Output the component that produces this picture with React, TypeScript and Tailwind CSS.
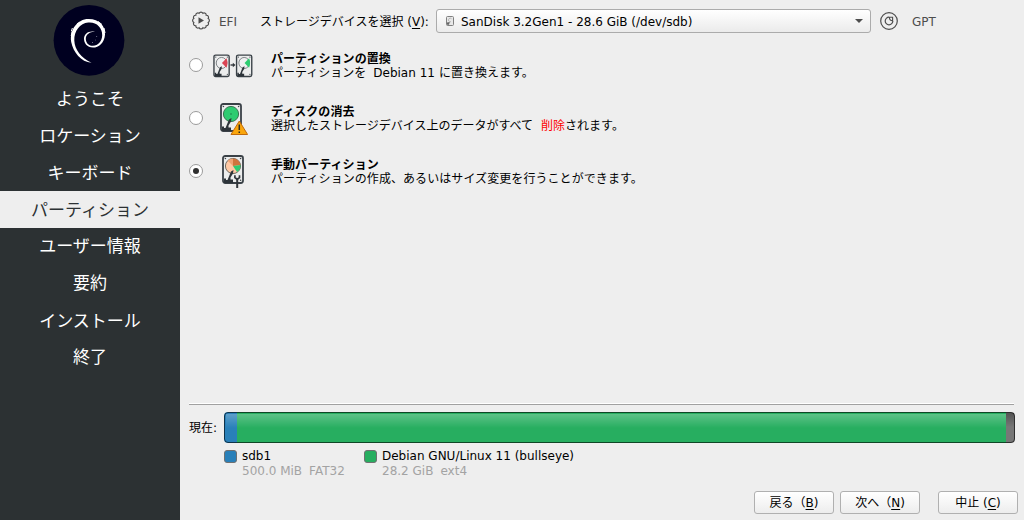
import type { ReactNode } from 'react';

const steps = [
  { id: 'welcome', label: 'ようこそ', height: 'h-[37px]' },
  { id: 'locale', label: 'ロケーション', height: 'h-[37px]' },
  { id: 'keyboard', label: 'キーボード', height: 'h-[37px]' },
  { id: 'partition', label: 'パーティション', height: 'h-[37px]' },
  { id: 'users', label: 'ユーザー情報', height: 'h-9' },
  { id: 'summary', label: '要約', height: 'h-[37px]' },
  { id: 'install', label: 'インストール', height: 'h-[38px] pt-px' },
  { id: 'finished', label: '終了', height: 'h-9' },
];

const currentStep = 'partition';

function DebianLogo() {
  return (
    <svg className="w-[72px] h-[72px]" viewBox="53 4 72 72" fill="none">
      <circle cx="89" cy="40.3" r="35.4" fill="#000020" />
      <path
        d="M91.5 62.7C81 62.2 73.2 52 71.2 42C69.3 29.8 77.5 19 88.3 19C99 18.8 105.7 26 105 34.7C104.3 43 98.8 47.6 93 47.6C87 47.5 83.8 43 84 38.3C84.3 33.4 89 30.2 95.3 31.8C90.5 31.3 86 34.2 85.8 38.5C85.7 42.7 88.6 46 93 45.8C98 45.4 102 41.5 102.2 35.2C102.3 27.5 96.2 21.7 88.2 22.6C80 23.4 74 31 74.3 40.5C74.7 49.8 81 58 91.5 62.7Z"
        fill="#fff"
      />
      <path d="M77 24l3-2M71.4 31l1-3M71.2 36l1-5M98 21.5l4 3M104 28l1 5" stroke="#fff" strokeWidth="1" />
      <g fill="#8888a0">
        <circle cx="96.7" cy="36.6" r="0.5" />
        <circle cx="95.5" cy="40" r="0.4" />
        <circle cx="92.5" cy="42.5" r="0.5" />
      </g>
    </svg>
  );
}

// Outline of a cog with rounded teeth, one arc per tooth
const TEETH = 12;
const cogPoints = Array.from({ length: TEETH }, (_, i) => {
  const angle = ((i + 0.5) * 2 * Math.PI) / TEETH;
  return `${(7.4 * Math.cos(angle)).toFixed(2)} ${(7.4 * Math.sin(angle)).toFixed(2)}`;
});
const cogPath = `M${cogPoints[TEETH - 1]}${cogPoints.map((p) => `A2.1 2.1 0 0 1 ${p}`).join('')}Z`;

function EfiIcon() {
  return (
    <svg className="w-5 h-5" viewBox="-10 -9.5 20 20" fill="none">
      <path d={cogPath} stroke="#4d4d4d" strokeWidth="1.15" />
      <path d="M-2.5 -3.3L3 0L-2.5 3.3Z" fill="#4d4d4d" />
    </svg>
  );
}

function TableIcon() {
  return (
    <svg className="w-5 h-5" viewBox="-10 -10 20 20" fill="none" stroke="#4d4d4d">
      <circle r="8.3" strokeWidth="1.2" />
      <path d="M0 -3.8A3.8 3.8 0 1 0 3.8 0" strokeWidth="1.2" />
      <path d="M.4 -3.8H3.6V-.2Q.4 -.4 .4 -3.8Z" strokeWidth="1.1" />
    </svg>
  );
}

function Drive({ children }: { children: ReactNode }) {
  return (
    <>
      <rect x="1" y="1" width="20" height="27" rx="2.2" fill="#eceded" stroke="#3a4147" strokeWidth="1.8" />
      <g fill="#3a4147">
        <circle cx="3.4" cy="3.5" r="0.8" />
        <circle cx="18.6" cy="3.5" r="0.8" />
        <circle cx="18.6" cy="25.3" r="0.8" />
      </g>
      {children}
      <path d="M2 23.5H4V25H5.5L9 16.5L11.5 15L11 18.5L8.5 22.5V24.5H11V28H2Z" fill="#2d343a" />
    </>
  );
}

function ReplaceIcon() {
  return (
    <svg className="w-10 h-6" viewBox="0 0 40 24" fill="none">
      <g transform="translate(.2 .3) scale(.76 .79)">
        <Drive>
          <circle cx="11" cy="11" r="7" fill="#eff0f1" stroke="#6c7276" strokeWidth="1.1" />
          <path d="M11.5 11L17.5 5Q20 11 17.5 17Z" fill="#da4453" />
        </Drive>
      </g>
      <path d="M17.5 11H20" stroke="#31363b" strokeWidth="1.4" />
      <path d="M19.8 8.8L22.5 11L19.8 13.2Z" fill="#31363b" />
      <g transform="translate(22.8 .3) scale(.76 .79)">
        <Drive>
          <circle cx="11" cy="11" r="7" fill="#eff0f1" stroke="#6c7276" strokeWidth="1.1" />
          <path d="M11.5 11L17.5 5Q20 11 17.5 17Z" fill="#2ecc71" />
        </Drive>
      </g>
    </svg>
  );
}

function EraseIcon() {
  return (
    <svg className="w-7 h-8 ml-[2px]" viewBox="0 0 28 32" fill="none">
      <Drive>
        <circle cx="11" cy="11" r="7.6" fill="#2ecc71" stroke="#3b7552" />
        <circle cx="11" cy="11" r="0.8" fill="#247c47" />
      </Drive>
      <path d="M19.3 18L27.6 31.5H11Z" fill="#faa60c" stroke="#c06a0c" />
      <path d="M19.3 21.5V27M19.3 28.5V30" stroke="#2b2b20" strokeWidth="1.5" />
    </svg>
  );
}

function ManualIcon() {
  return (
    <svg className="w-[22px] h-[34px]" viewBox="0 0 22 34" fill="none">
      <Drive>
        <circle cx="11" cy="11" r="7.6" fill="#ffc9a5" stroke="#706b61" />
        <path d="M11 11L5.7 5.7A7.4 7.4 0 0 1 11 3.5Z" fill="#efa375" />
        <path d="M11 11V3.5A7.5 7.5 0 0 1 18.5 10Z" fill="#cf753d" />
        <path d="M11 11L18.5 10A7.5 7.5 0 0 1 15 17Z" fill="#2ecc71" />
      </Drive>
      <path d="M12.9 20.2V22.5L15.2 24.3L17.5 22.5V20.2" stroke="#31363b" strokeWidth="1.7" />
      <path d="M15.2 24V33" stroke="#31363b" strokeWidth="2" />
    </svg>
  );
}

function DiskIcon() {
  return (
    <svg className="w-2 h-2.5" viewBox="0 0 8 10" fill="none">
      <rect x="0.5" y="0.5" width="7" height="9" rx="1" fill="#e8e8e8" stroke="#808080" />
      <path d="M5.5 2.7A1.8 1.8 0 1 0 5 5.7" stroke="#aaa" strokeWidth="0.8" />
      <path d="M1 6.5L3.8 6L3 8.7H1Z" fill="#666" />
    </svg>
  );
}

const choices = [
  {
    id: 'replace',
    icon: <ReplaceIcon />,
    title: 'パーティションの置換',
    text: (
      <>
        パーティションを<span className="ml-[7px] mr-1">Debian 11</span>に置き換えます。
      </>
    ),
  },
  {
    id: 'erase',
    icon: <EraseIcon />,
    title: 'ディスクの消去',
    text: (
      <>
        選択したストレージデバイス上のデータがすべて
        <span className="ml-2 text-[#ff0000]">削除</span>されます。
      </>
    ),
  },
  {
    id: 'manual',
    icon: <ManualIcon />,
    title: '手動パーティション',
    text: (
      <span className="tracking-[0.07px]">パーティションの作成、あるいはサイズ変更を行うことができます。</span>
    ),
  },
];

const selectedChoice = 'manual';

function Radio({ checked }: { checked: boolean }) {
  return (
    <span className="w-3.5 h-3.5 mb-0.5 shrink-0 rounded-full border border-[#9b9b9b] bg-white flex items-center justify-center">
      {checked && <span className="w-1.5 h-1.5 rounded-full bg-[#303030]" />}
    </span>
  );
}

const legend = [
  { name: 'sdb1', size: '500.0 MiB', fs: 'FAT32', color: 'bg-[#2980b9]', width: 'w-[140px]' },
  { name: 'Debian GNU/Linux 11 (bullseye)', size: '28.2 GiB', fs: 'ext4', color: 'bg-[#27ae60]', width: 'w-60' },
];

function Button({ children }: { children: ReactNode }) {
  return (
    <button className="w-20 h-[23px] rounded-[3px] border border-[#b0b0b0] bg-linear-to-b from-white to-[#ededed] leading-[14px] whitespace-nowrap text-black">
      {children}
    </button>
  );
}

function Key({ children }: { children: ReactNode }) {
  return <span className="underline underline-offset-2 decoration-1">{children}</span>;
}

export default function App() {
  return (
    <div
      lang="ja"
      className="flex w-[1024px] h-[520px] overflow-hidden bg-[#eeeeee] text-black text-[12px] leading-[14px] font-['DejaVu_Sans','Noto_Sans_CJK_JP',sans-serif]"
    >
      {/* Sidebar */}
      <aside className="w-[180px] shrink-0 bg-[#2c3133]">
        <div className="h-20 pt-1 flex justify-center items-start pr-0.5">
          <DebianLogo />
        </div>
        <nav>
          {steps.map((step) => (
            <div
              key={step.id}
              className={`${step.height} flex items-center justify-center text-[17px] leading-5 ${
                step.id === currentStep ? 'bg-[#eeeeee] text-[#2c3133]' : 'text-white'
              }`}
            >
              {step.label}
            </div>
          ))}
        </nav>
      </aside>

      <main className="flex-1 flex flex-col">
        {/* Device selector */}
        <div className="flex items-center h-[42px] pl-[11px] text-[#4d4d4d]">
          <EfiIcon />
          <span className="ml-2 w-[41px] pt-0.5">EFI</span>
          <span className="w-44 pt-0.5 text-black whitespace-nowrap">
            ストレージデバイスを選択 (<Key>V</Key>):
          </span>
          <div className="flex items-center w-[435px] h-6 pl-[9px] pr-[7px] rounded-[3px] border border-[#ababab] bg-linear-to-b from-white to-[#ebebeb] text-black">
            <DiskIcon />
            <span className="ml-[7px] flex-1 pt-0.5">SanDisk 3.2Gen1 - 28.6 GiB (/dev/sdb)</span>
            <svg className="w-2 h-1" viewBox="0 0 8 4">
              <path d="M0 0H8L4 4Z" fill="#4d4d4d" />
            </svg>
          </div>
          <span className="ml-2">
            <TableIcon />
          </span>
          <span className="ml-3 pl-px pt-0.5">GPT</span>
        </div>

        {/* Choices */}
        <div className="flex flex-col -mt-[3px]">
          {choices.map((choice) => (
            <div key={choice.id} className="h-[53px] flex items-center pl-[9px]">
              <Radio checked={choice.id === selectedChoice} />
              <span className="w-10 ml-[10px] flex justify-center">{choice.icon}</span>
              <div className="ml-[18px] whitespace-nowrap">
                <div className="font-bold tracking-[0.05px]">{choice.title}</div>
                <div>{choice.text}</div>
              </div>
            </div>
          ))}
        </div>

        {/* Current layout */}
        <div className="mt-auto pl-[9px] pr-[9px]">
          <div className="mr-px h-0.5 border-t border-t-white bg-[#a0a0a0]" />
          <div className="flex items-center mt-[7px]">
            <span className="w-[35px]">現在:</span>
            <div className="relative flex w-[791px] h-[31px] rounded-[4px] overflow-hidden">
              <div className="w-[13px] bg-[#2980b9]" />
              <div className="flex-1 bg-[#27ae60]" />
              <div className="w-[9px] bg-[#777777]" />
              <div className="absolute inset-0 rounded-[4px] border border-black/60" />
              <div className="absolute left-0.5 right-[9px] top-0.5 h-3.5 bg-linear-to-b from-white/25 to-transparent" />
              <div className="absolute right-px top-px w-2 h-3.5 bg-linear-to-b from-black/30 to-transparent" />
            </div>
          </div>
          <div className="flex pl-[35px] mt-1.5">
            {legend.map((item) => (
              <div key={item.name} className={`${item.width} flex items-start`}>
                <span className={`w-[13px] h-[13px] mt-px shrink-0 rounded-[3px] border border-[#707070] ${item.color}`} />
                <div className="ml-[5px] leading-[15px] whitespace-nowrap">
                  <div>{item.name}</div>
                  <div className="-mb-px text-[#a3a3a3]">
                    {item.size}
                    <span className="ml-[7px]">{item.fs}</span>
                  </div>
                </div>
              </div>
            ))}
          </div>
        </div>

        {/* Footer buttons */}
        <div className="flex justify-end gap-1.5 mt-[13px] pr-1.5 pb-1.5">
          <Button>
            戻る（<Key>B</Key>)
          </Button>
          <Button>
            次へ（<Key>N</Key>)
          </Button>
          <span className="ml-3 flex">
            <Button>
              中止 (<Key>C</Key>)
            </Button>
          </span>
        </div>
      </main>
    </div>
  );
}
